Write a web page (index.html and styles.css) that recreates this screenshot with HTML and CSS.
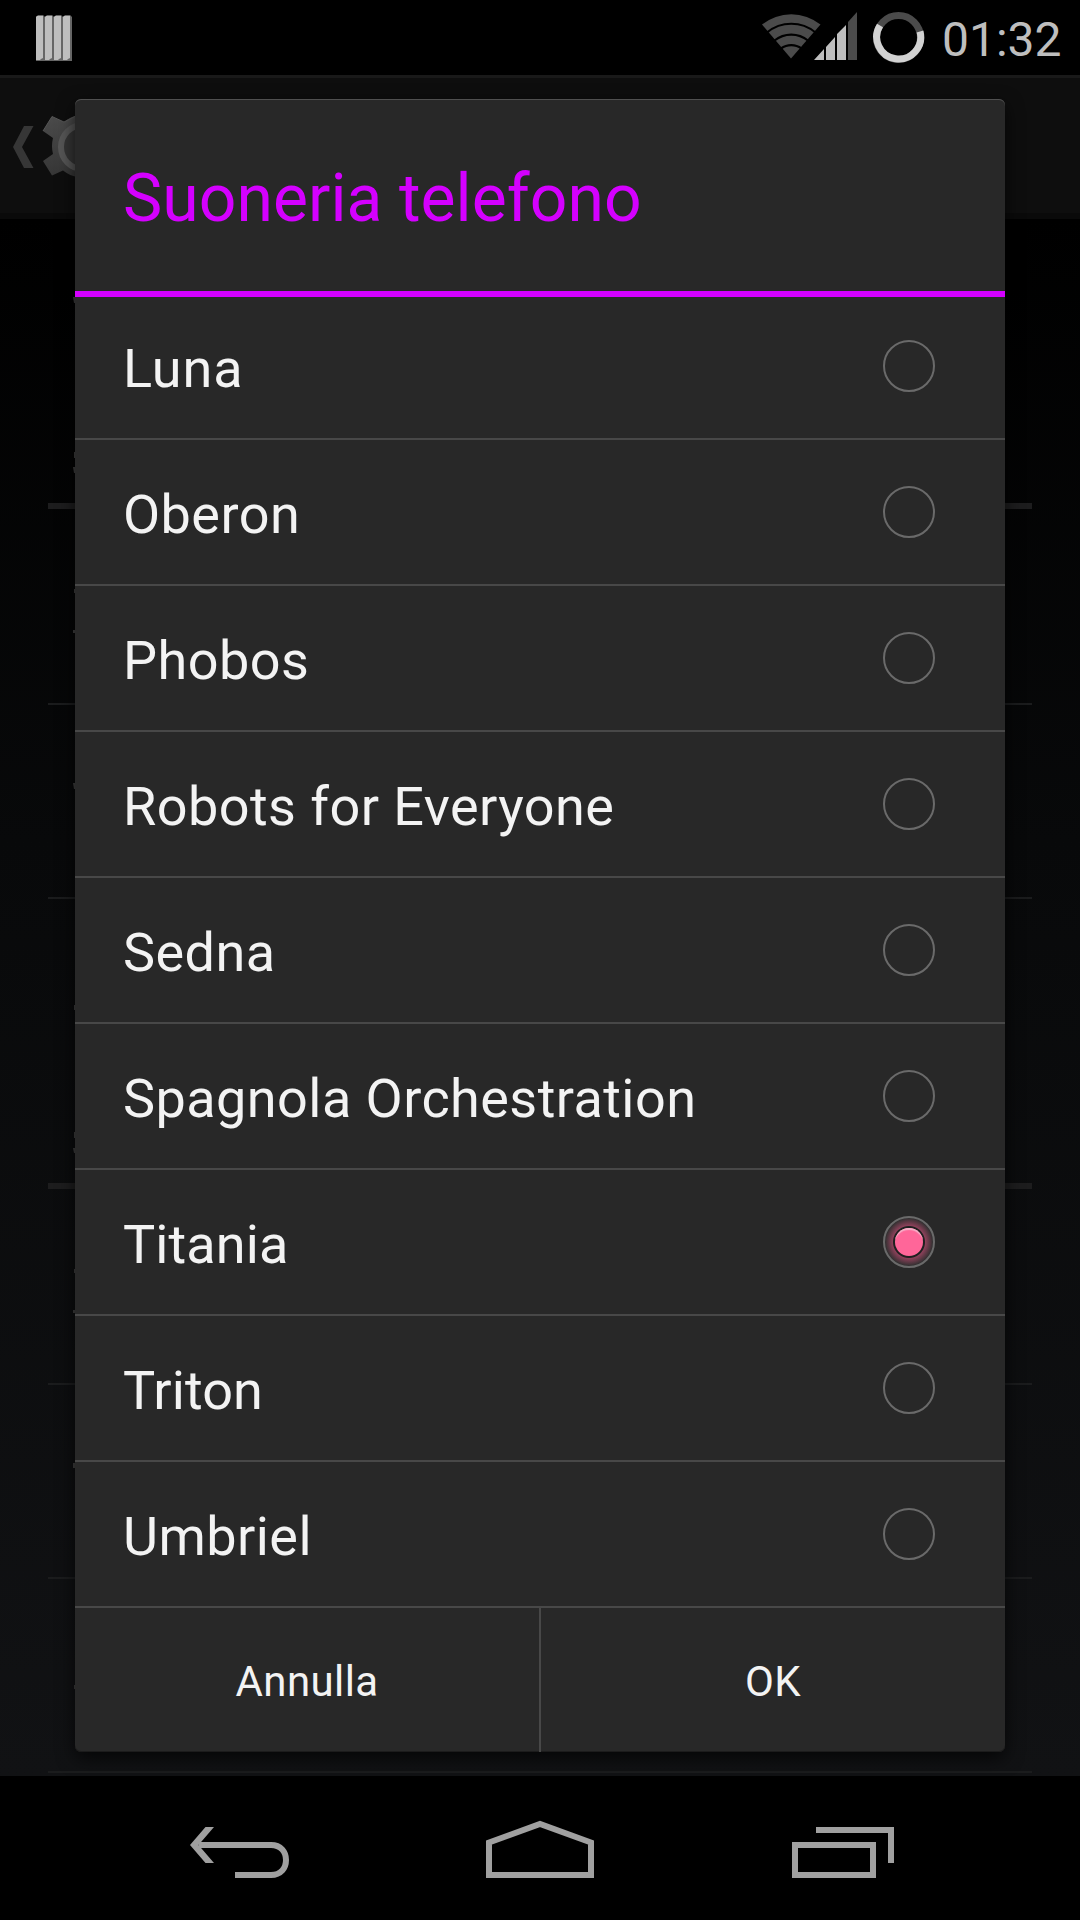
FILE: index.html
```html
<!DOCTYPE html>
<html lang="it">
<head>
<meta charset="utf-8">
<title>Suoneria telefono</title>
<link rel="stylesheet" href="styles.css">
</head>
<body>
<div class="screen">
  <header class="status">
    <svg class="notif" width="36" height="46" viewBox="0 0 36 46"><g id="bar"><path d="M2 0h5l2 2v44H0V2z" fill="#666"/><path d="M1 1h6v42l-2 1-1 1H0V2z" fill="#bebebe"/></g><use href="#bar" x="9"/><use href="#bar" x="18"/><use href="#bar" x="27"/></svg>
    <svg class="signals" width="163" height="52" viewBox="0 0 163 52">
      <g fill="#4b4b4b"><path d="M0 12.500A47 47 0 0 1 58.500 12.500L29 46.500z"/></g>
      <g fill="none" stroke="#000" stroke-width="2.200"><path d="M5 20.500A38 38 0 0 1 53.500 20.500M12.500 28.500A27 27 0 0 1 46 28.500M19 36.500A17 17 0 0 1 39.500 36.500"/></g>
      <g fill="#bebebe"><path d="M52 48L62 37V48zM64 48V35L73 25V48zM75 48V22L84 13V48z"/></g>
      <path d="M86 48V10L95 0V48z" fill="#4b4b4b"/>
      <circle cx="136.500" cy="25.500" r="22" fill="none" stroke="#4b4b4b" stroke-width="7"/>
      <path d="M158 19.500A22 22 0 1 1 118 13.500" fill="none" stroke="#d2d2d2" stroke-width="7"/>
    </svg>
    <span class="clock">01:32</span>
  </header>
  <main class="content">
    <div class="actionbar">
      <svg width="90" height="80" viewBox="0 0 90 80">
        <defs><linearGradient id="metal" x1="0" y1="0" x2="0" y2="1"><stop offset="0" stop-color="#4b4b4b"/><stop offset="1" stop-color="#363636"/></linearGradient></defs>
        <path d="M24 18h9.500L22 39l11.500 21H24L13 39z" fill="#363636"/>
        <path d="M52 8.500L64 14Q70 9 78 7V69Q70 68 63 62.500L52 67.500L43 53L53 46Q51 38 53 30L43 23z" fill="url(#metal)"/>
        <path d="M43 23L52 8.500L64 14L76 8" fill="none" stroke="#555" stroke-width="1"/>
        <circle cx="83" cy="39" r="22" fill="#353535" stroke="#565656" stroke-width="6"/>
      </svg>
    </div>
    <div class="settings">
      <i class="rule heavy first"></i><i class="rule second"></i><i class="rule"></i>
      <i class="rule heavy third"></i><i class="rule second"></i><i class="rule"></i><i class="rule"></i>
    </div>
    <svg class="edges" width="3" height="1701" viewBox="0 75 3 1701" fill="#404040">
      <path d="M0 297h2v6h-1zM1 452h1v6h-1zM0 467h2v6h-1zM1 589h1v4h-1zM0 630h2v3H0zM0 783h2v6h-1zM1 1005h1v5h-1zM1 1132h1v6h-1zM0 1148h2v5h-1zM1 1269h1v4h-1zM0 1310h2v3H0zM0 1463h2v5H0zM1 1685h1v4h-1z"/>
    </svg>
    <section class="dialog">
      <h1>Suoneria telefono</h1>
      <ul>
        <li><span class="wide">Luna</span><b></b></li>
        <li><span>Oberon</span><b></b></li>
        <li><span>Phobos</span><b></b></li>
        <li><span>Robots for Everyone</span><b></b></li>
        <li><span>Sedna</span><b></b></li>
        <li><span>Spagnola Orchestration</span><b></b></li>
        <li><span class="tight">Titania</span><b class="on"></b></li>
        <li><span class="tight">Triton</span><b></b></li>
        <li><span>Umbriel</span><b></b></li>
      </ul>
      <div class="buttons"><button>Annulla</button><button>OK</button></div>
    </section>
  </main>
  <nav class="nav">
    <svg width="1080" height="144" viewBox="0 1776 1080 144" fill="none" stroke="#a0a0a0" stroke-width="6">
      <path d="M199 1845H271C281 1845 286 1852 286 1860S281 1875 271 1875H235"/>
      <path d="M205.500 1827H214L198.500 1845L214 1863H205.500L190 1845z" fill="#a0a0a0" stroke="none"/>
      <path d="M489 1875V1842.500L540 1824L591 1842.500V1875z"/>
      <path d="M795 1845H873V1875H795zM816 1830H891V1863"/>
    </svg>
  </nav>
</div>
</body>
</html>
```
FILE: styles.css
```css
* { box-sizing: border-box; margin: 0; padding: 0; }
body { background: #000; font-family: Roboto, sans-serif; }
.screen { width: 1080px; height: 1920px; display: flex; flex-direction: column; overflow: hidden; }
.status { height: 75px; padding: 0 19px 0 36px; display: flex; align-items: flex-start; color: #bebebe; }
.notif { margin-top: 15px; }
.signals { margin: 12px 16px 0 auto; }
.clock { width: 120px; padding-left: 1px; font-size: 48px; line-height: 80px; }
.content { height: 1701px; position: relative; background: linear-gradient(#000 144px, #08090a 45%, #111214); }
.actionbar { height: 144px; padding-top: 30px; background: #0e0e0e; border-top: 3px solid #191919; border-bottom: 6px solid #0a0a0a; }
.actionbar svg { display: block; }
.settings { padding: 0 48px; }
.rule { display: block; height: 2px; margin-top: 192px; background: #1b1c1d; }
.rule.heavy { height: 6px; background: #1d1d1e; }
.rule.first { margin-top: 284px; }
.rule.second { margin-top: 194px; }
.rule.third { margin-top: 284px; }
.edges { position: absolute; left: 73px; top: 0; }
.dialog { position: absolute; left: 75px; top: 24px; width: 930px; height: 1653px; border-radius: 6px; background: #282828; box-shadow: inset 0 1px #505050, inset 0 -1px #1c1c1c, 0 6px 18px rgba(0,0,0,.7); display: flex; flex-direction: column; color: #f3f3f3; }
h1 { height: 198px; padding-left: 48px; border-bottom: 6px solid #d400ff; color: #d400ff; font-size: 66px; line-height: 200px; font-weight: 400; letter-spacing: .06px; }
ul { list-style: none; }
li { height: 146px; padding: 2px 70px 0 48px; border-bottom: 2px solid #484848; display: flex; align-items: center; justify-content: space-between; font-size: 54px; letter-spacing: .44px; }
li:first-child { height: 143px; padding-top: 0; }
li span { padding-top: 2px; }
li .wide { letter-spacing: .9px; }
li .tight { letter-spacing: .1px; }
li b { width: 52px; height: 52px; border: 2px solid #6a6a6a; border-radius: 50%; margin-top: -2px; }
li:first-child b { margin-top: -4px; }
li b.on { display: grid; place-items: center; background: radial-gradient(circle, #202020 15.500px, #8b4059 16.500px, #303030 24px); }
li b.on::after { content: ""; width: 28px; height: 28px; border-radius: 50%; background: #ff6699; box-shadow: inset 0 3px 1px -1px #f5b3ca; }
.buttons { flex: 1; display: flex; }
button { flex: 1; border: 0; padding-top: 2px; background: none; color: #f3f3f3; font: 42px Roboto, sans-serif; letter-spacing: .4px; }
button + button { border-left: 2px solid #484848; }
.nav { height: 144px; }
.nav svg { display: block; }
```
